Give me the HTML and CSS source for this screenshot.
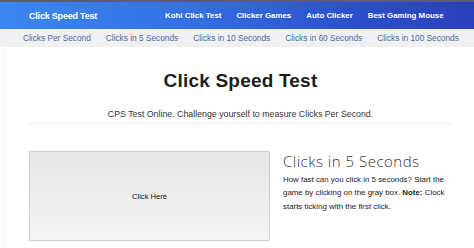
FILE: index.html
```html
<!DOCTYPE html>
<html>
<head>
<meta charset="utf-8">
<link rel="stylesheet" href="styles.css">
</head>
<body>
<div class="topline"></div>
<header class="navbar">
  <a class="brand">Click Speed Test</a>
  <nav class="mainnav">
    <a>Kohi Click Test</a>
    <a>Clicker Games</a>
    <a>Auto Clicker</a>
    <a>Best Gaming Mouse</a>
  </nav>
</header>
<nav class="subnav">
  <a>Clicks Per Second</a>
  <a>Clicks in 5 Seconds</a>
  <a>Clicks in 10 Seconds</a>
  <a>Clicks in 60 Seconds</a>
  <a>Clicks in 100 Seconds</a>
</nav>
<main class="page">
  <h1 class="title">Click Speed Test</h1>
  <p class="lead">CPS Test Online. Challenge yourself to measure Clicks Per Second.</p>
  <hr class="rule">
  <section class="game">
    <div class="clickbox">Click Here</div>
    <div class="info">
      <h2 class="info-title">Clicks in 5 Seconds</h2>
      <p class="info-text">How fast can you click in 5 seconds? Start the game by clicking on the gray box. <b>Note:</b> Clock starts ticking with the first click.</p>
    </div>
  </section>
</main>
</body>
</html>
```
FILE: styles.css
```css
html, body { margin: 0; padding: 0; background: #fff; }
body { width: 474px; height: 248px; overflow: hidden; font-family: "Liberation Sans", Arial, sans-serif; }
a { text-decoration: none; white-space: nowrap; }
.topline { height: 2px; background: #5a5f6a; }
.navbar {
  height: 27px;
  display: flex;
  align-items: center;
  background: linear-gradient(90deg, #3b87f1 0%, #3470e4 40%, #2c4fcb 75%, #2a3fbd 100%);
  padding-left: 29px;
}
.brand { color: #fff; font-size: 9px; font-weight: bold; letter-spacing: -0.2px; width: 136px; }
.mainnav { display: flex; gap: 15px; }
.mainnav a { color: #fff; font-size: 7.9px; font-weight: bold; }
.subnav {
  height: 18px;
  display: flex;
  align-items: center;
  gap: 15px;
  padding-left: 23px;
  background: #f0f0f2;
}
.subnav a { color: #4a6ca6; font-size: 8.3px; }
.page {
  margin-left: 3px;
  border-left: 1px solid #f0f0f0;
  padding: 0 22px 0 25px;
  height: 201px;
}
.title {
  margin: 0;
  padding-top: 24px;
  text-align: center;
  font-size: 19px;
  line-height: 19px;
  color: #1d1d1d;
  font-weight: bold;
  letter-spacing: 0.2px;
}
.lead {
  margin: 18px 0 0;
  text-align: center;
  font-size: 8.8px;
  line-height: 12px;
  color: #333;
}
.rule { margin: 3px 0 0; border: 0; border-top: 1px solid #ececec; }
.game { display: flex; margin-top: 27px; gap: 13px; }
.clickbox {
  flex: none;
  width: 239px;
  height: 88px;
  border: 1px solid #d0d0d0;
  background: linear-gradient(180deg, #e6e6e6 0%, #f4f4f4 100%);
  display: flex;
  align-items: center;
  justify-content: center;
  font-size: 7.6px;
  color: #111;
}
.info { width: 170px; }
.info-title {
  margin: 0;
  font-family: "Open Sans", sans-serif;
  font-size: 15px;
  font-weight: 300;
  letter-spacing: 0.5px;
  color: #333;
  line-height: 20px;
}
.info-text {
  margin: 2px 0 0;
  font-size: 7.9px;
  line-height: 13.3px;
  color: #222;
}
```
